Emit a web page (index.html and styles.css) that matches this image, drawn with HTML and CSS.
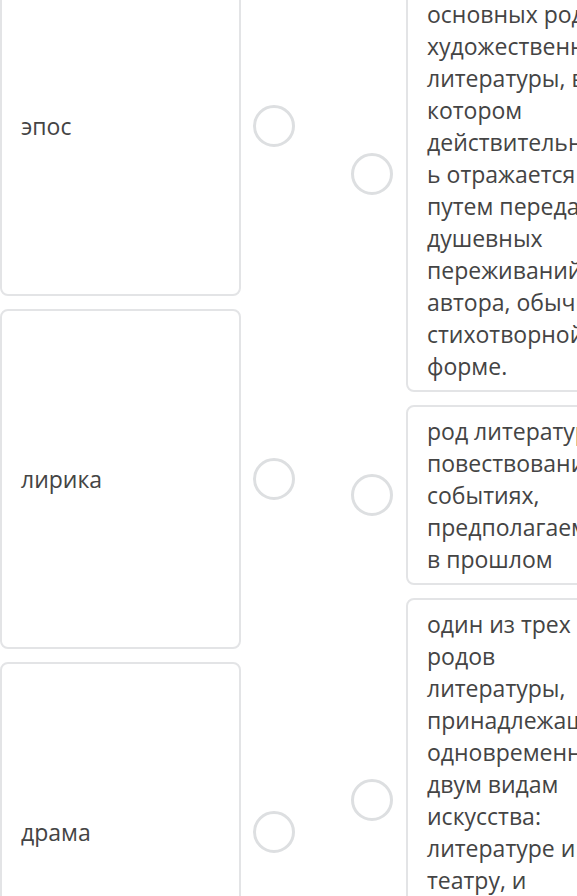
FILE: index.html
```html
<!DOCTYPE html>
<html lang="ru">
<head>
  <meta charset="UTF-8">
  <title>Соотнесите понятия</title>
  <meta name="viewport" content="width=device-width, initial-scale=1.0">
  <link rel="stylesheet" href="styles.css">
</head>
<body>

  <div class="board">
    <div class="column left">
      <div class="item">
        <div class="card">эпос</div>
        <span class="dot"></span>
      </div>
      <div class="item">
        <div class="card">лирика</div>
        <span class="dot"></span>
      </div>
      <div class="item">
        <div class="card">драма</div>
        <span class="dot"></span>
      </div>
    </div>

    <div class="column right">
      <div class="item">
        <span class="dot"></span>
        <div class="card">один из основных родов художественной литературы, в котором действительность отражается путем передачи душевных переживаний автора, обычно в стихотворной форме.</div>
      </div>
      <div class="item">
        <span class="dot"></span>
        <div class="card">род литературы, повествование о событиях, предполагаемых в прошлом</div>
      </div>
      <div class="item">
        <span class="dot"></span>
        <div class="card">один из трех родов литературы, принадлежащий одновременно двум видам искусства: литературе и театру, и предназначенный для постановки.</div>
      </div>
    </div>
  </div>

</body>
</html>
```

FILE: styles.css
```css
html, body {
  margin: 0;
  background: #fff;
  overflow: hidden;
}
body {
  font-family: "Open Sans", "Noto Sans", sans-serif;
  font-size: 23px;
  line-height: 32px;
  color: #444;
}
.board {
  display: flex;
  gap: 56px;
  width: 700px;
  margin-top: -44px;
}
.column {
  display: flex;
  flex-direction: column;
  gap: 13px;
}
.item {
  display: flex;
  align-items: center;
  gap: 12px;
}
.left .item { flex: 1; }
.left .card {
  width: 241px;
  align-self: stretch;
  display: flex;
  align-items: center;
}
.right .item { gap: 13px; }
.right .card { width: 201px; }
.card {
  box-sizing: content-box;
  background: #fff;
  border: 2px solid #e3e4e6;
  border-radius: 8px;
  padding: 8px 19px;
  overflow-wrap: break-word;
}
.left .card { box-sizing: border-box; }
.dot {
  flex: none;
  width: 42px;
  height: 42px;
  box-sizing: border-box;
  border: 3px solid #dddfe1;
  border-radius: 50%;
}
```
